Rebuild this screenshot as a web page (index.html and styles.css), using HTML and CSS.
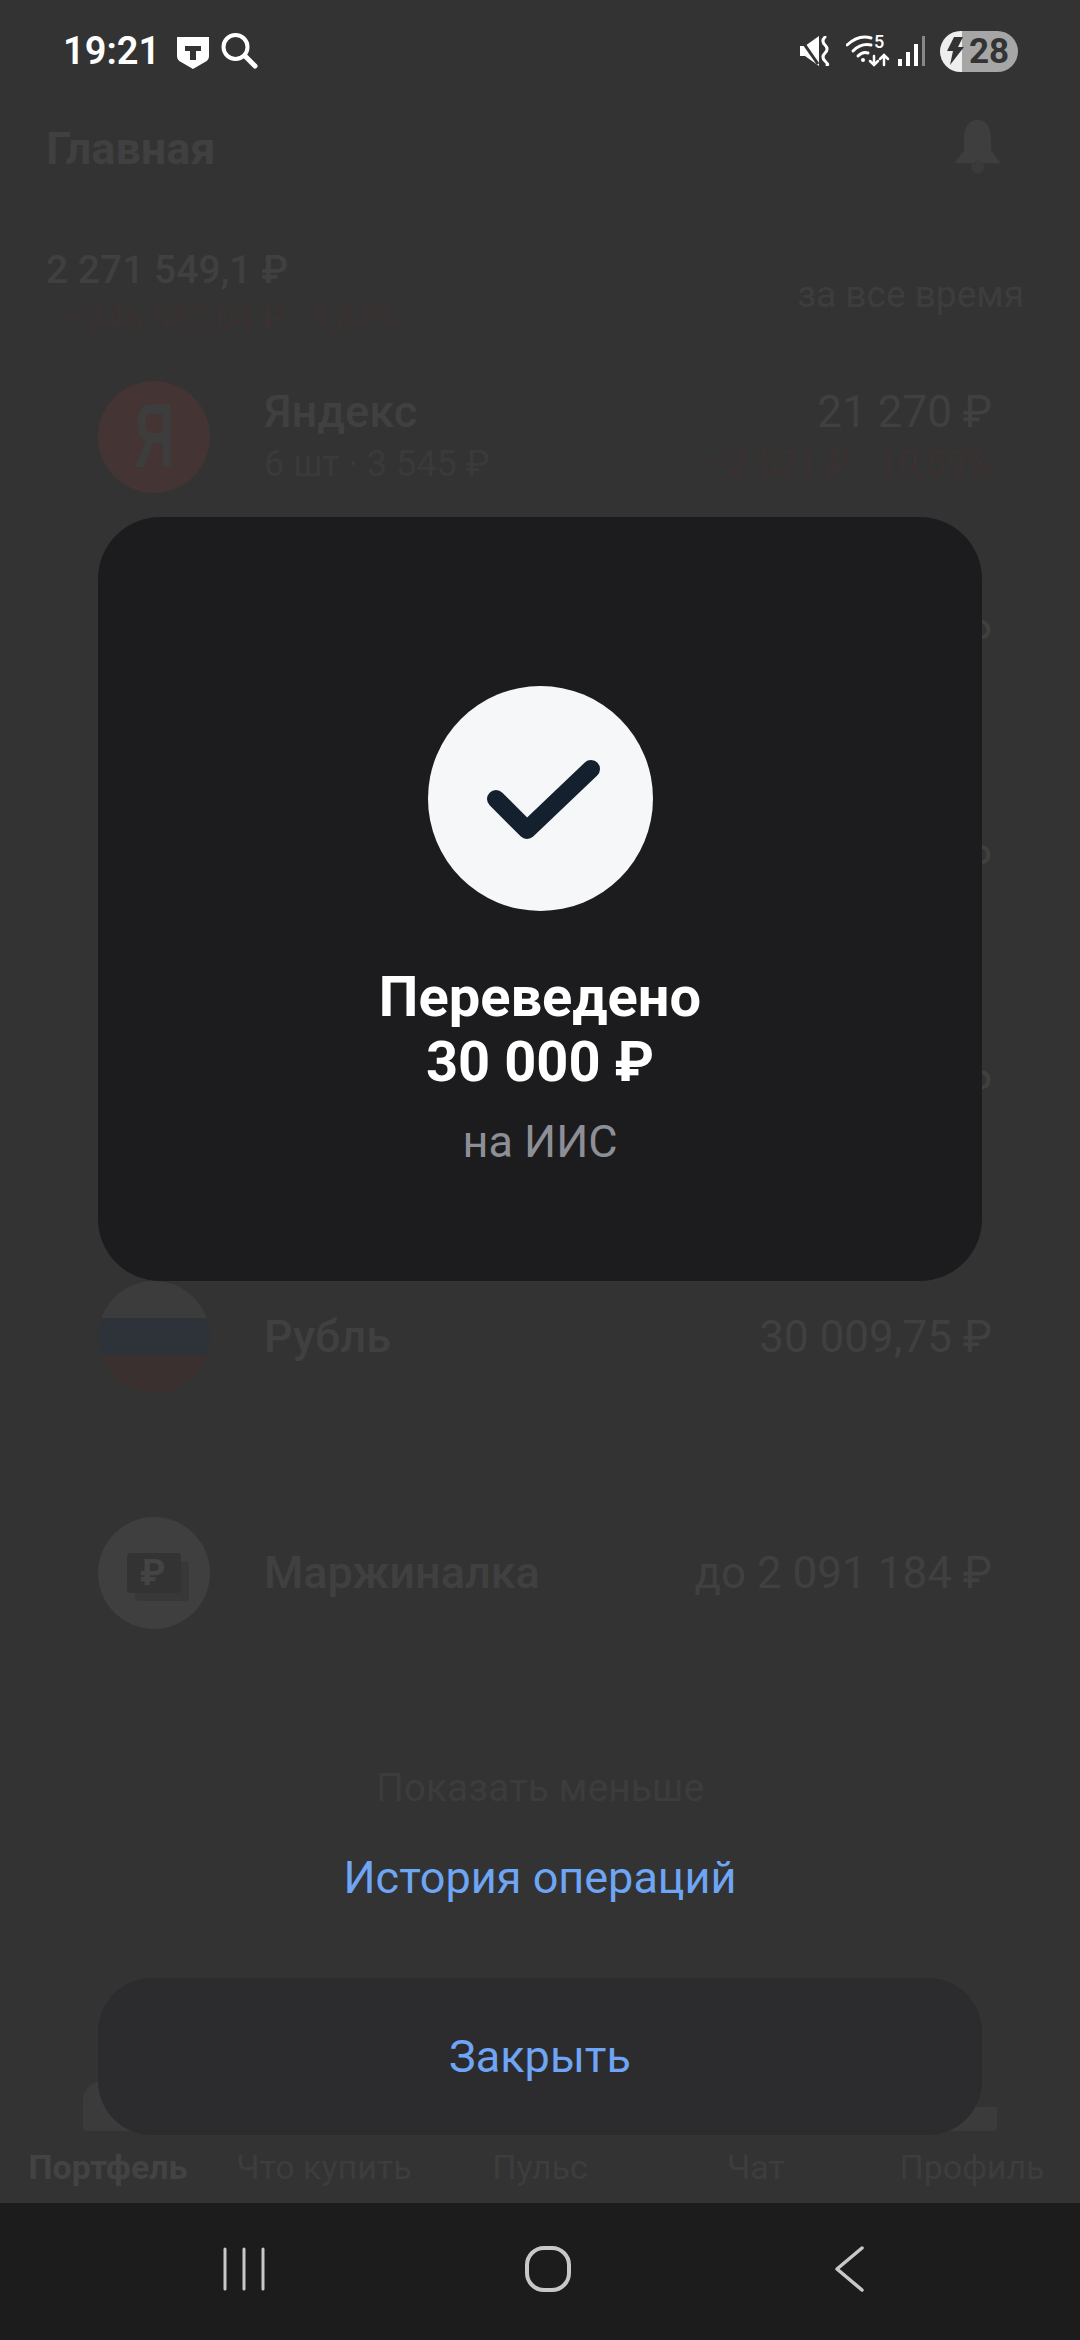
FILE: index.html
```html
<!DOCTYPE html>
<html lang="ru">
<head>
    <meta charset="UTF-8">
    <meta name="viewport" content="width=device-width, initial-scale=1.0">
    <title>Переведено</title>
    <link rel="stylesheet" href="styles.css">
</head>
<body>
    <div class="screen">
        <div class="app">
            <div class="status">
                <div class="status-left">
                    <span class="clock">19:21</span>
                    <svg class="shield" width="32" height="32" viewBox="0 0 32 32">
                        <path d="M0 0H32V19Q32 23 28 25L16 32L4 25Q0 23 0 19Z" fill="#fff"/>
                        <path d="M8 9H24V14H19V23H13V14H8Z" fill="#333"/>
                    </svg>
                    <svg class="search" width="38" height="38" viewBox="0 0 38 38" fill="none" stroke="#fff" stroke-linecap="round">
                        <circle cx="15.500" cy="15" r="12" stroke-width="4"/>
                        <path d="M25 24L35 34" stroke-width="5"/>
                    </svg>
                </div>
                <div class="status-right">
                    <svg class="mute" width="30" height="30" viewBox="0 0 30 30">
                        <path d="M0 10H5L19 0V30L5 20H0Z" fill="#fff"/>
                        <path d="M0 2L18 28" stroke="#333" stroke-width="3"/>
                        <path d="M25 1Q21 5 25 9T25 17T25 25T27 29" stroke="#fff" stroke-width="3" fill="none" stroke-linecap="round"/>
                    </svg>
                    <div class="wifi">
                        <svg width="44" height="32" viewBox="0 0 44 32" fill="none" stroke="#fff" stroke-linecap="round">
                            <path d="M1 10Q13 -1 25 3" stroke-width="3"/>
                            <path d="M7 16Q15 8 25 10" stroke-width="3"/>
                            <path d="M12 21Q17 16 22 18" stroke-width="3"/>
                            <circle cx="17" cy="25" r="2" fill="#fff" stroke="none"/>
                            <path d="M28 21V30M24 26L28 30L32 26M38 30V20M34 24L38 20L42 24" stroke-width="2.500"/>
                        </svg>
                        <span class="wifi-num">5</span>
                    </div>
                    <svg width="28" height="30" viewBox="0 0 28 30">
                        <rect x="0" y="23" width="4" height="7" fill="#fff"/>
                        <rect x="8" y="16" width="4" height="14" fill="#fff"/>
                        <rect x="16" y="8" width="4" height="22" fill="#fff"/>
                        <rect x="24" y="0" width="3" height="30" fill="#888"/>
                    </svg>
                    <div class="battery">
                        <svg class="bolt" width="20" height="28" viewBox="0 0 20 28">
                            <path d="M10 0H19L14 10H20L6 28L9 14H3Z" fill="#333"/>
                        </svg>
                        <span>28</span>
                    </div>
                </div>
            </div>

            <div class="header">
                <span class="title">Главная</span>
                <svg width="55" height="56" viewBox="0 0 66 70">
                    <path d="M33 0C46 0 50 12 50 26V38L62 54H4L16 38V26C16 12 20 0 33 0Z" fill="#3e3e3e"/>
                    <circle cx="33" cy="59" r="8" fill="#3a3a3a"/>
                </svg>
            </div>

            <div class="summary">
                <div>
                    <div class="total">2 271 549,1 ₽</div>
                    <div class="change">−246 357,04 ₽ · 9,87%</div>
                </div>
                <span class="period">за все время</span>
            </div>

            <div class="row">
                <div class="avatar avatar-ya"><span>Я</span></div>
                <div class="info">
                    <div class="name">Яндекс</div>
                    <div class="sub">6 шт · 3 545 ₽</div>
                </div>
                <div class="values">
                    <div class="value">21 270 ₽</div>
                    <div class="delta">−2 521 ₽ · 10,59%</div>
                </div>
            </div>
            <div class="row row-hidden"><div class="values"><div class="value">₽</div><div class="delta"></div></div></div>
            <div class="row row-hidden"><div class="values"><div class="value">₽</div><div class="delta"></div></div></div>
            <div class="row row-hidden"><div class="values"><div class="value">₽</div><div class="delta"></div></div></div>
            <div class="row">
                <div class="avatar avatar-flag"><i></i><i></i><i></i></div>
                <div class="info"><div class="name">Рубль</div></div>
                <div class="values"><div class="value">30 009,75 ₽</div></div>
            </div>
            <div class="row row-last">
                <div class="avatar avatar-margin">
                    <div class="margin-icon">₽</div>
                </div>
                <div class="info"><div class="name">Маржиналка</div></div>
                <div class="values"><div class="value">до 2 091 184 ₽</div></div>
            </div>

            <div class="show-less">Показать меньше</div>

            <div class="tabs">
                <div class="tab tab-active">
                    <div class="tab-icon"></div>
                    Портфель
                </div>
                <div class="tab"><div class="tab-icon"></div>Что купить</div>
                <div class="tab"><div class="tab-icon"></div>Пульс</div>
                <div class="tab"><div class="tab-icon"></div>Чат</div>
                <div class="tab"><div class="tab-icon tab-icon-user"></div>Профиль</div>
            </div>
        </div>

        <div class="navbar">
            <svg width="44" height="44" viewBox="0 0 44 44" stroke="#c8c8c8" stroke-width="3" stroke-linecap="round">
                <path d="M3 2V42M22 2V42M41 2V42"/>
            </svg>
            <svg width="48" height="46" viewBox="0 0 48 46" fill="none" stroke="#c8c8c8" stroke-width="4">
                <rect x="3" y="2" width="42" height="42" rx="17"/>
            </svg>
            <svg width="40" height="46" viewBox="0 0 40 46" fill="none" stroke="#c8c8c8" stroke-width="3.500" stroke-linecap="round" stroke-linejoin="round">
                <path d="M33 2L8 23L33 44"/>
            </svg>
        </div>

        <div class="overlay">
            <div class="modal">
                <div class="check">
                    <svg width="225" height="225" viewBox="0 0 225 225" fill="none" stroke="#14202e" stroke-width="18" stroke-linecap="round" stroke-linejoin="round">
                        <path d="M68 113L99 144L163 83"/>
                    </svg>
                </div>
                <div class="modal-title">Переведено<br>30 000 ₽</div>
                <div class="modal-sub">на ИИС</div>
            </div>
            <div class="history">История операций</div>
            <div class="close-btn">Закрыть</div>
        </div>
    </div>
</body>
</html>
```
FILE: styles.css
```css
* {
    box-sizing: border-box;
}
html, body {
    margin: 0;
    padding: 0;
}
body {
    background-color: #333;
    font-family: Roboto, "Noto Sans", sans-serif;
}
.screen {
    position: relative;
    width: 1080px;
    height: 2340px;
    overflow: hidden;
    display: flex;
    flex-direction: column;
    background-color: #333;
}
.app {
    height: 2203px;
    display: flex;
    flex-direction: column;
    color: #404040;
}

/* status bar */
.status {
    height: 104px;
    flex: none;
    padding: 30px 62px 0 63px;
    display: flex;
    justify-content: space-between;
    align-items: flex-start;
}
.status-left, .status-right {
    display: flex;
    align-items: center;
    height: 42px;
}
.clock {
    color: #fff;
    font-size: 38px;
    font-weight: 600;
}
.shield {
    margin-left: 17px;
    margin-top: 4px;
}
.search {
    margin-left: 11px;
}
.status-right {
    gap: 8px;
}
.mute {
    margin-right: 8px;
}
.wifi {
    position: relative;
    width: 44px;
    height: 32px;
}
.wifi svg {
    display: block;
}
.wifi-num {
    position: absolute;
    left: 28px;
    top: -2px;
    color: #fff;
    font-size: 18px;
    font-weight: 500;
    line-height: 18px;
}
.battery {
    width: 78px;
    height: 41px;
    margin-left: 6px;
    border-radius: 21px;
    background: linear-gradient(90deg, #eee 0 22px, #a6a6a6 22px);
    display: flex;
    align-items: center;
    color: #333;
    font-size: 35px;
    font-weight: 700;
}
.bolt {
    margin-left: 4px;
    margin-right: 5px;
}

/* dimmed page under the dialog */
.header {
    height: 88px;
    flex: none;
    padding: 0 75px 0 46px;
    display: flex;
    justify-content: space-between;
    align-items: center;
}
.title {
    font-size: 45px;
    font-weight: 700;
}
.summary {
    height: 132px;
    flex: none;
    padding: 55px 56px 0 46px;
    display: flex;
    justify-content: space-between;
    align-items: flex-start;
}
.total {
    font-size: 39px;
    font-weight: 500;
    line-height: 46px;
}
.change {
    font-size: 34px;
    line-height: 50px;
    color: #3b3131;
    margin-left: 20px;
}
.period {
    margin-top: 26px;
    font-size: 37px;
    line-height: 44px;
    color: #3d3d3d;
}
.row {
    height: 225px;
    flex: none;
    padding: 0 88px 0 98px;
    display: flex;
    align-items: center;
}
.row-hidden {
    justify-content: flex-end;
}
.row-last {
    height: 248px;
}
.avatar {
    width: 112px;
    height: 112px;
    flex: none;
    margin-right: 54px;
    border-radius: 50%;
    overflow: hidden;
    display: flex;
    align-items: center;
    justify-content: center;
}
.avatar-ya {
    background-color: #443534;
    color: #3d3d3d;
    font-size: 90px;
    font-weight: 700;
    font-family: "Liberation Sans", sans-serif;
}
.avatar-ya span {
    transform: scaleX(0.62);
}
.avatar-flag {
    flex-direction: column;
}
.avatar-flag i {
    display: block;
    width: 100%;
    flex: 1;
    background-color: #3c3c3c;
}
.avatar-flag i:nth-child(2) {
    background-color: #2d3338;
}
.avatar-flag i:nth-child(3) {
    background-color: #3b3030;
}
.avatar-margin {
    background-color: #3f3f3f;
}
.margin-icon {
    width: 54px;
    height: 40px;
    border-radius: 4px;
    background-color: #333;
    color: #444;
    font-size: 36px;
    font-weight: 700;
    line-height: 40px;
    padding-left: 13px;
    box-shadow: 8px 8px 0 #383838;
}
.info {
    flex: 1;
}
.name {
    font-size: 45px;
    font-weight: 500;
    line-height: 54px;
}
.sub {
    font-size: 36px;
    line-height: 50px;
    color: #3a3a3a;
}
.values {
    text-align: right;
}
.value {
    font-size: 44px;
    line-height: 54px;
}
.delta {
    font-size: 36px;
    line-height: 50px;
    color: #3b3131;
    min-height: 50px;
}
.show-less {
    margin-top: 68px;
    text-align: center;
    font-size: 39px;
    color: #3c3c3c;
}
.tabs {
    margin-top: auto;
    padding-bottom: 16px;
    display: grid;
    grid-template-columns: repeat(5, 1fr);
    text-align: center;
    font-size: 34px;
    color: #3d3d3d;
}
.tab-active {
    font-weight: 700;
    color: #434343;
}
.tab-icon {
    width: 50px;
    height: 50px;
    margin: 0 auto 16px;
    border-radius: 20px 20px 4px 4px;
    background-color: #3b3b3b;
}
.tab-icon-user {
    clip-path: inset(26px 0 0 0);
}

/* android nav */
.navbar {
    height: 137px;
    flex: none;
    padding: 0 211px 6px 222px;
    background-color: #1c1c1c;
    display: flex;
    justify-content: space-between;
    align-items: center;
}

/* dialog */
.overlay {
    position: absolute;
    inset: 0;
    padding: 517px 98px 205px;
    display: flex;
    flex-direction: column;
    align-items: stretch;
}
.modal {
    height: 764px;
    padding-top: 169px;
    border-radius: 62px;
    background-color: #1c1c1e;
    display: flex;
    flex-direction: column;
    align-items: center;
}
.check {
    width: 225px;
    height: 225px;
    border-radius: 50%;
    background-color: #f5f7f9;
}
.check svg {
    display: block;
}
.modal-title {
    margin-top: 54px;
    color: #fff;
    font-size: 56px;
    font-weight: 700;
    line-height: 65px;
    text-align: center;
}
.modal-sub {
    margin-top: 22px;
    color: #8e8f96;
    font-size: 45px;
    line-height: 50px;
}
.history {
    margin-top: auto;
    margin-bottom: 74px;
    color: #6ea5f5;
    font-size: 45px;
    line-height: 52px;
    text-align: center;
}
.close-btn {
    height: 157px;
    border-radius: 54px;
    background-color: #2c2c2e;
    color: #6ea5f5;
    font-size: 45px;
    display: flex;
    align-items: center;
    justify-content: center;
}
```
